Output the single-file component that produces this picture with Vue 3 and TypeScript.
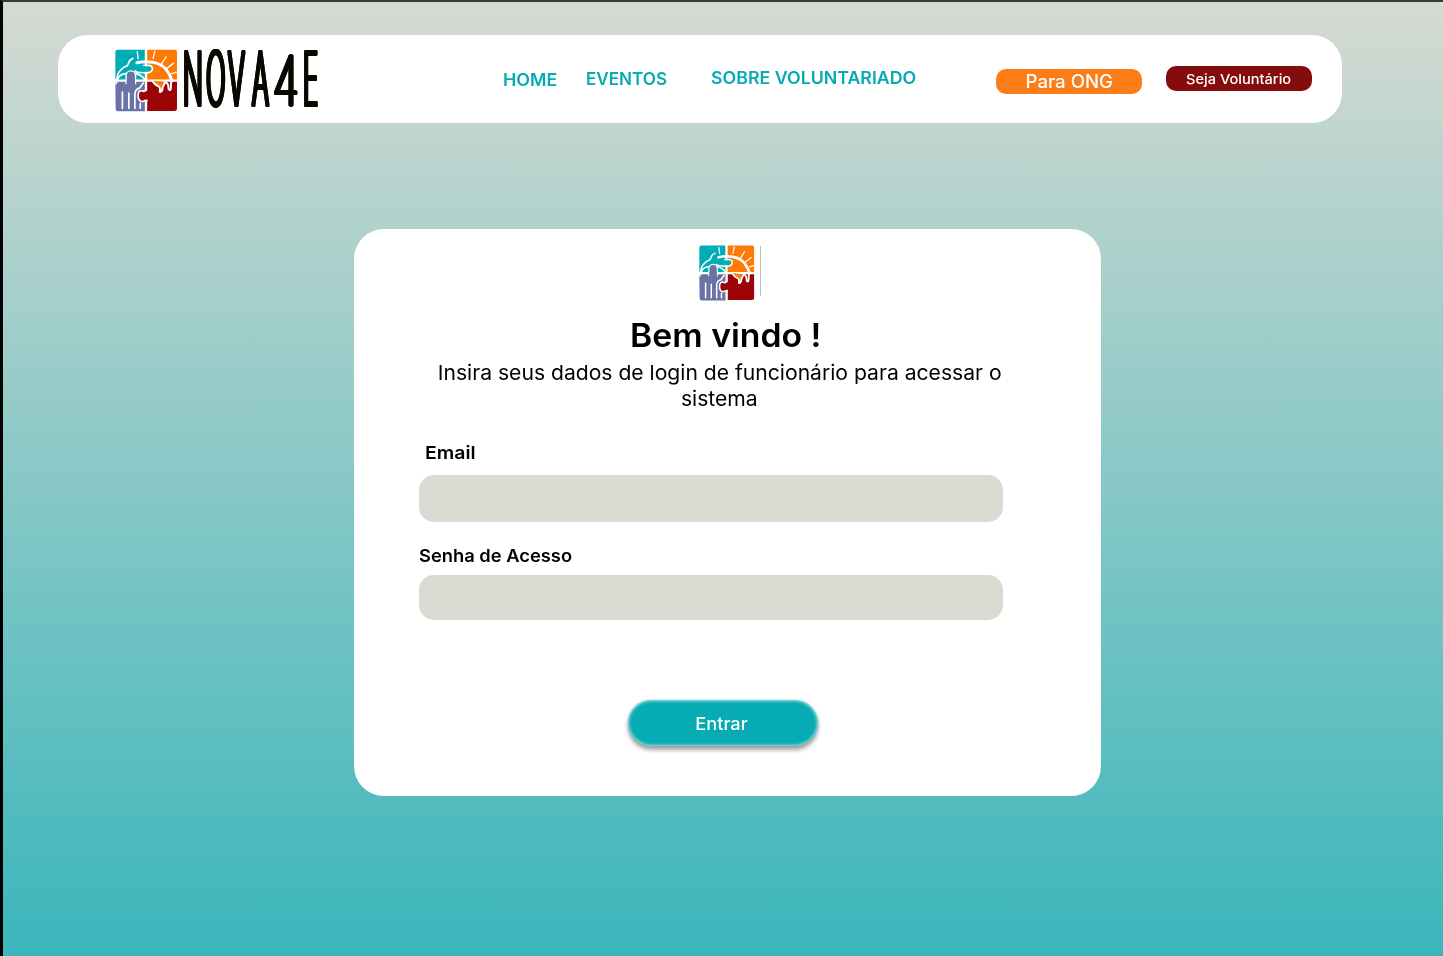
<script setup lang="ts">
import { ref } from 'vue'

interface NavLink {
  label: string
  name: string
}

const links: NavLink[] = [
  { label: 'HOME', name: 'home' },
  { label: 'EVENTOS', name: 'events' },
  { label: 'SOBRE VOLUNTARIADO', name: 'about' },
]

const email = ref('')
const password = ref('')
</script>

<template>
  <div class="page">
    <svg class="defs" width="0" height="0" aria-hidden="true">
      <symbol id="puzzle" viewBox="32 29 187 187">
        <path fill="#00adb5" d="M40 31Q33 31 33 38V121H121V31Z" />
        <path fill="#ff7a05" d="M126 31H210Q216 31 216 38V122H126Z" />
        <path fill="#6973a5" d="M33 123H122V214H40Q34 214 34 207Z" />
        <path fill="#9b0306" d="M127 123H216V206Q216 213 209 213H127Z" />
        <g fill="none" stroke="#fff" stroke-linecap="round" stroke-linejoin="round">
          <path stroke-width="7" d="M124 30V72M124 98V215M32 123H217" />
          <path stroke-width="9" d="M97 70C130 62 166 68 184 90Q196 104 201 124" />
          <path stroke-width="5" d="M85 57C68 62 76 75 66 80C54 82 52 90 46 95C38 102 42 110 35 121" />
          <path fill="#00adb5" stroke-width="5" d="M117 78H128Q142 76 143 87Q142 99 130 99H117" />
          <path stroke-width="5" d="M92 94C98 102 108 98 120 99" />
          <path stroke-width="4" d="M98 37L101 58M150 36L145 57M184 52L171 72M206 71L184 88M214 98L201 102" />
          <path fill="#ff7a05" stroke-width="6" d="M142 122Q150 136 161 140Q167 142 165 156Q172 158 174 142L181 128" />
          <path stroke-width="6" d="M181 128Q191 128 191 148Q198 156 198 142V126" />
          <path stroke-width="5" d="M35 132L42 114Q50 102 66 102M92 102Q111 104 122 122" />
          <path fill="#6973a5" stroke-width="4" d="M65 132V108A14 14 0 0 1 93 108V132" />
          <path stroke-width="5" d="M54 157V205M73 160V205M91 163V205M107 190V205M116 130L105 145Q92 148 91 163" />
          <path fill="#9b0306" stroke-width="5" d="M127 182C121 177 118 188 109 184Q101 181 101 171V163Q102 152 112 153Q122 158 123 148" />
        </g>
        <path fill="#00adb5" d="M112 80.5H122V96.5H112Z" />
        <path fill="#6973a5" d="M67 119H91V150H67Z" />
        <path fill="#9b0306" d="M120 159L127 153H132V178H118Z" />
      </symbol>
    </svg>

    <header class="header">
      <div class="brand">
        <svg class="brand-icon"><use href="#puzzle" /></svg>
        <svg class="wordmark" viewBox="0 0 140 64" role="img" aria-label="NOVA4E">
          <text transform="translate(0 59) scale(.35 1)" x="3 69 132 201">NOVA</text>
          <text class="four" transform="translate(92 59) scale(.65 1)" x="-2">4</text>
          <text transform="translate(121 59) scale(.35 1)" x="0">E</text>
        </svg>
      </div>
      <nav class="nav">
        <a v-for="link in links" :key="link.name" :class="['link', link.name]"><span>{{ link.label }}</span></a>
      </nav>
      <div class="actions">
        <button type="button" class="pill ong"><span>Para ONG</span></button>
        <button type="button" class="pill volunteer"><span>Seja Voluntário</span></button>
      </div>
    </header>

    <main class="card">
      <div class="card-logo">
        <svg class="card-icon"><use href="#puzzle" /></svg>
        <i class="divider"></i>
      </div>
      <h1><span>Bem vindo !</span></h1>
      <p class="intro"><span class="line">Insira seus dados de login de funcionário para acessar o</span> <span class="line">sistema</span></p>
      <form @submit.prevent>
        <label class="email-label" for="email"><span>Email</span></label>
        <input id="email" v-model="email" class="email" type="text" />
        <label class="password-label" for="password"><span>Senha de Acesso</span></label>
        <input id="password" v-model="password" class="password" type="password" />
        <button type="submit" class="submit"><span>Entrar</span></button>
      </form>
    </main>
  </div>
</template>

<style>
html, body { margin: 0; overflow: hidden; }
</style>

<style scoped>
.page {
  box-sizing: border-box;
  width: 1443px;
  height: 956px;
  padding: 33px 0 0 55px;
  border-top: 2px solid #383838;
  border-left: 3px solid #000;
  background: linear-gradient(180deg, #d5dad2, #3ab6bb);
  font-family: Inter, "Open Sans", sans-serif;
  color: #000;
  overflow: hidden;
}
.defs { position: absolute; }
span { display: inline-block; transform-origin: 0 50%; white-space: nowrap; }
.header {
  box-sizing: border-box;
  display: flex;
  width: 1284px;
  height: 88px;
  padding-left: 57px;
  border-radius: 30px;
  background: #fff;
}
.brand { display: flex; width: 388px; padding-top: 14px; box-sizing: border-box; }
.brand-icon { width: 63px; height: 63px; }
.wordmark {
  width: 140px;
  height: 64px;
  margin: -3px 0 0 3px;
  overflow: visible;
  font-family: Inter, sans-serif;
  font-size: 73px;
  font-weight: 100;
  fill: #080801;
  stroke: #080801;
  stroke-width: 4px;
  stroke-linejoin: round;
  filter: drop-shadow(1.1px 0 0 #080801) drop-shadow(1.2px 0 0 #080801) drop-shadow(.6px 0 0 #080801);
}
.four { font-size: 67px; stroke-width: 3px; }
.nav { display: flex; width: 493px; padding-top: 32px; box-sizing: border-box; }
.link {
  font-size: 17px;
  font-weight: 600;
  line-height: 24px;
  color: #06abb2;
  white-space: nowrap;
}
.home { width: 83px; padding-top: 1px; }
.home span { transform: scaleX(1.05); }
.events { width: 125px; }
.events span { transform: scaleX(1.005); }
.about { margin-top: -1px; }
.about span { transform: scaleX(1.045); }
.actions { display: flex; gap: 24px; padding-top: 31px; }
.pill {
  width: 146px;
  height: 25px;
  padding: 0;
  border: 0;
  border-radius: 10px;
  color: #fff;
  font-family: inherit;
  white-space: nowrap;
}
.pill span, .submit span, h1 span, .intro span { transform-origin: 50% 50%; }
.ong { margin-top: 3px; background: #fc7d17; font-size: 18px; font-weight: 550; line-height: 23px; }
.ong span { transform: scaleX(1.035); }
.volunteer { background: #850c0d; font-size: 13.5px; font-weight: 550; line-height: 26px; }
.volunteer span { transform: scaleX(1.08); }
.card {
  box-sizing: border-box;
  width: 747px;
  height: 567px;
  margin: 106px 0 0 296px;
  padding: 16px 0 0 65px;
  border-radius: 30px;
  background: #fff;
}
.card-logo { display: flex; height: 56px; padding-left: 280px; }
.card-icon { width: 56px; height: 56px; }
.divider { width: 1px; height: 50px; margin: 1px 0 0 5px; background: #bbb; }
h1 {
  width: 613px;
  margin: 15px 0 0;
  font-size: 32px;
  font-weight: 600;
  line-height: 40px;
  text-align: center;
}
h1 span { transform: scaleX(1.055); }
.intro {
  width: 601px;
  margin: 4px 0 0;
  font-size: 20.5px;
  font-weight: 400;
  line-height: 26px;
  text-align: center;
}
.intro .line { width: max-content; margin: 0 auto; display: block; transform: scaleX(1.03); }
form { display: flex; flex-direction: column; width: 584px; }
label { font-size: 17.5px; font-weight: 600; line-height: 24px; }
.email-label { margin: 29px 0 0 6px; }
.email-label span { transform: scaleX(1.11); }
.password-label { margin-top: 22px; }
.password-label span { transform: scaleX(1.047); }
input { box-sizing: border-box; width: 584px; padding: 0 16px; border: 0; border-radius: 15px; background: #dadad2; outline: 0; font-size: 18px; }
.email { height: 47px; margin-top: 10px; }
.password { height: 45px; margin-top: 7px; }
.submit {
  width: 190px;
  height: 46px;
  margin: 80px 0 0 209px;
  padding: 2px 4px 0 0;
  border: 0;
  border-radius: 23px;
  background: #07abb3;
  box-shadow: inset 0 0 3px 1px rgb(255 255 255 / 65%), 0 4px 4px rgb(0 0 0 / 35%), 0 0 3px rgb(0 90 90 / 25%);
  color: #fff;
  font-family: inherit;
  font-size: 17px;
  font-weight: 550;
}
.submit span { transform: scaleX(1.07); }
</style>
